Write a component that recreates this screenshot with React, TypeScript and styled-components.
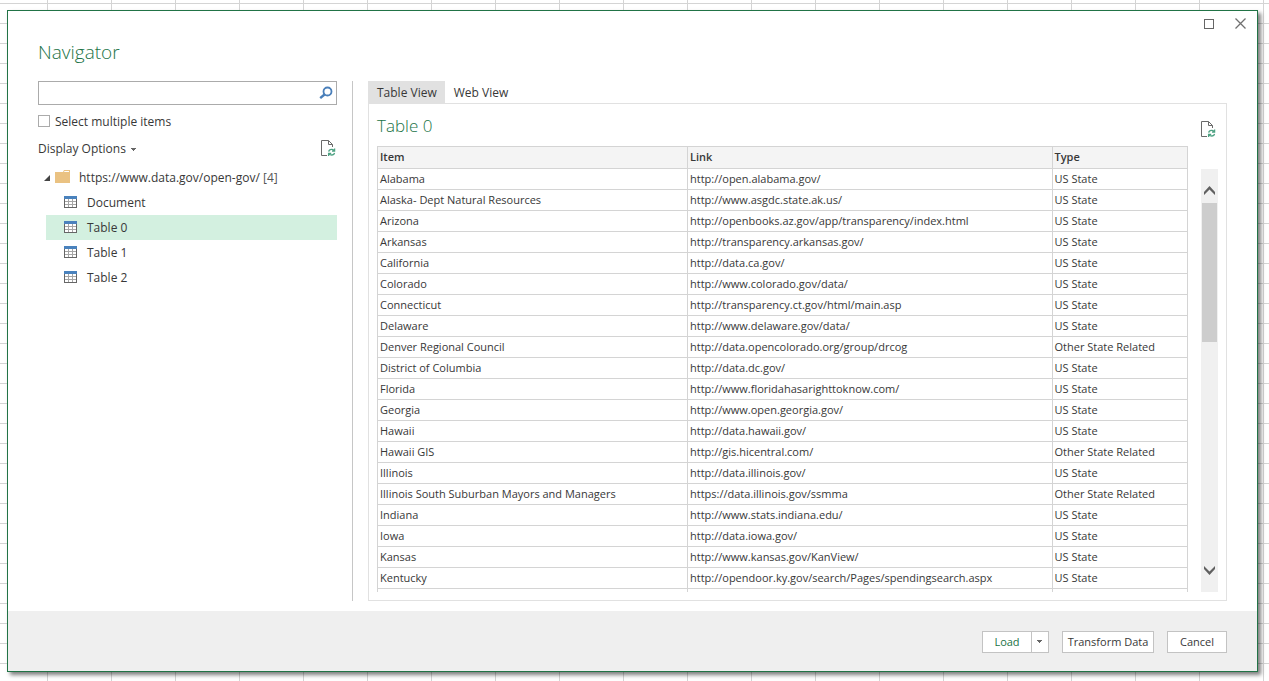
import React, { useState } from "react";
import styled, { createGlobalStyle } from "styled-components";

const GlobalStyle = createGlobalStyle`
  *, *::before, *::after { box-sizing: border-box; }
  body {
    margin: 0;
    font-family: "Open Sans", "Noto Sans", sans-serif;
    font-size: 12px;
    line-height: 16px;
    color: #383838;
  }
  button, input { font: inherit; color: inherit; }
  button { margin: 0; padding: 0; border: 0; background: none; }
  svg { display: block; flex: none; }
`;

const Sheet = styled.div`
  display: flex;
  height: 100vh;
  min-height: 480px;
  padding: 10px 11px 9px 7px;
  background-color: #fff;
  background-image:
    linear-gradient(to right, #d4d4d4 1px, transparent 1px),
    linear-gradient(to bottom, #d4d4d4 1px, transparent 1px);
  background-size: 64px 20px;
  background-position: 47px 3px;
`;

const Dialog = styled.section`
  flex: 1;
  min-width: 0;
  display: flex;
  flex-direction: column;
  border: 1px solid #217346;
  background: #fff;
  box-shadow: 3px 3px 4px rgba(0, 0, 0, 0.5);
`;

const TitleBar = styled.header`
  display: flex;
  justify-content: space-between;
  align-items: flex-start;
  height: 70px;
  padding: 0 8px 0 30px;
`;

const Title = styled.h1`
  margin: 26px 0 0;
  font-size: 19px;
  line-height: 30px;
  font-weight: 300;
  color: #217346;
`;

const WindowControls = styled.div`
  display: flex;
  gap: 16px;
  padding-top: 5px;
`;

const IconButton = styled.button`
  display: flex;
  align-items: center;
  justify-content: center;
  width: 16px;
  height: 16px;
`;

const Body = styled.div`
  flex: 1;
  min-height: 0;
  display: flex;
  padding: 0 30px 10px;
`;

const Sidebar = styled.div`
  flex: none;
  display: flex;
  flex-direction: column;
  width: 315px;
  padding-right: 15px;
  border-right: 1px solid #c6c6c6;
`;

const SearchBox = styled.div`
  display: flex;
  align-items: center;
  height: 24px;
  padding-right: 2px;
  border: 1px solid #ababab;
`;

const SearchInput = styled.input`
  flex: 1;
  min-width: 0;
  height: 22px;
  padding: 0 4px;
  border: 0;
  outline: 0;
  background: none;
`;

const CheckLabel = styled.label`
  display: flex;
  align-items: flex-start;
  gap: 5px;
  height: 18px;
  margin-top: 9px;
`;

const CheckBox = styled.input`
  appearance: none;
  width: 12px;
  height: 12px;
  margin: 1px 0 0;
  border: 1px solid #ababab;
  background: #fff;
  &:checked { background: #217346; }
`;

const OptionsRow = styled.div`
  display: flex;
  align-items: center;
  justify-content: space-between;
  height: 20px;
  margin-top: 6px;
  padding-right: 1px;
`;

const OptionsButton = styled.button`
  display: flex;
  align-items: center;
  gap: 5px;
  padding-top: 2px;
`;

const Tree = styled.ul`
  list-style: none;
  margin: 7px 0 0;
  padding: 0;
`;

const RootRow = styled.button`
  display: flex;
  align-items: center;
  width: 100%;
  height: 25px;
  padding-left: 6px;
  text-align: left;
`;

const FolderSlot = styled.span`
  padding: 0 0 2px 5px;
`;

const RootLabel = styled.span`
  padding-left: 9px;
  white-space: nowrap;
`;

const Count = styled.span`
  color: #555;
`;

const Children = styled.ul`
  list-style: none;
  margin: 0;
  padding: 0 0 0 8px;
`;

const TreeRow = styled.button<{ $selected: boolean }>`
  display: flex;
  align-items: center;
  gap: 10px;
  width: 100%;
  height: 25px;
  padding-left: 18px;
  text-align: left;
  background: ${(p) => (p.$selected ? "#d3f0e0" : "transparent")};

  svg { margin-bottom: 1px; }
`;

const Preview = styled.div`
  flex: 1;
  min-width: 0;
  display: flex;
  flex-direction: column;
  margin-left: 15px;
`;

const Tabs = styled.div`
  display: flex;
  height: 22px;
`;

const Tab = styled.button<{ $active: boolean }>`
  height: 22px;
  padding: 2px 8px 0 9px;
  background: ${(p) => (p.$active ? "#e1e1e1" : "transparent")};
`;

const Panel = styled.div`
  flex: 1;
  min-height: 0;
  display: flex;
  flex-direction: column;
  padding: 0 8px 8px;
  border: 1px solid #e1e1e1;
`;

const PanelHeader = styled.div`
  display: flex;
  align-items: center;
  justify-content: space-between;
  height: 42px;
  padding: 8px 2px 0 0;
`;

const PanelTitle = styled.h2`
  margin: 0;
  padding-bottom: 6px;
  font-size: 17px;
  line-height: 24px;
  font-weight: 300;
  color: #217346;
`;

const Viewport = styled.div`
  flex: 1;
  min-height: 0;
  display: flex;
  gap: 13px;
`;

const TableClip = styled.div`
  flex: 1;
  min-width: 0;
  overflow: hidden;
`;

const DataTable = styled.table`
  width: 100%;
  table-layout: fixed;
  border-collapse: separate;
  border-spacing: 0;
  border-top: 1px solid #d4d4d4;
  border-left: 1px solid #d4d4d4;
  font-size: 11px;
  line-height: 16px;

  th, td {
    height: 21px;
    padding: 0 2px;
    border-right: 1px solid #d4d4d4;
    border-bottom: 1px solid #d4d4d4;
    text-align: left;
    white-space: nowrap;
    overflow: hidden;
  }
  th {
    height: 22px;
    padding-bottom: 2px;
    background: #f4f4f4;
    font-weight: 600;
  }
`;

const ItemCol = styled.col`
  width: 310px;
`;
const LinkCol = styled.col`
  width: 45%;
`;

const ScrollBar = styled.div`
  flex: none;
  display: flex;
  flex-direction: column;
  width: 17px;
  margin-top: 23px;
  background: #f0f0f0;
`;

const ScrollButton = styled.button`
  display: flex;
  align-items: center;
  justify-content: center;
  height: 34px;
  padding-top: 8px;

  &:last-child {
    margin-top: auto;
    padding: 0 0 10px;
  }
`;

const ScrollThumb = styled.div`
  height: 139px;
  margin: 0 1px;
  background: #cdcdcd;
`;

const Footer = styled.footer`
  display: flex;
  align-items: center;
  justify-content: flex-end;
  gap: 13px;
  height: 60px;
  padding: 2px 30px 0;
  background: #efefef;
  font-size: 11px;
`;

const PushButton = styled.button<{ $width: number }>`
  width: ${(p) => p.$width}px;
  height: 22px;
  border: 1px solid #c3c3c3;
  background: #fff;
  white-space: nowrap;
`;

const SplitButton = styled.div`
  display: flex;
  height: 22px;
  border: 1px solid #c3c3c3;
  background: #fff;
`;

const SplitMain = styled.button`
  width: 48px;
  color: #217346;
`;

const SplitArrow = styled.button`
  display: flex;
  align-items: center;
  justify-content: center;
  width: 17px;
  padding: 0 2px 2px 0;
  border-left: 1px solid #c3c3c3;
`;

const CaretIcon = () => (
  <svg width="5" height="3" viewBox="0 0 5 3" fill="#666" shapeRendering="crispEdges">
    <path d="M0 0h5v1H4v1H3v1H2V2H1V1H0z" />
  </svg>
);

const RefreshPageIcon = () => (
  <svg width="16" height="18" viewBox="0 0 16 18" fill="none">
    <path d="M7 16.5H1.500v-15H8.500l4 4V8" stroke="#6a6a6a" />
    <path d="M8.500 1.500v4h4" stroke="#6a6a6a" />
    <path d="M8.700 12.600c.3-1.500 1.400-2.200 2.800-2.200 1.200 0 2 .4 2.600 1.200M14.600 9.600v2.500h-2.600M14.500 13.800c-.3 1.500-1.400 2.200-2.800 2.200-1.200 0-2-.4-2.600-1.200M8.600 16.900v-2.500h2.600" stroke="#4ea283" strokeWidth="1.300" />
  </svg>
);

const SearchIcon = () => (
  <svg width="14" height="14" viewBox="0 0 14 14" fill="none" stroke="#4a7fba">
    <circle cx="8.500" cy="5.500" r="4" strokeWidth="1.800" />
    <path d="M5.500 8.500L1.200 12.200" strokeWidth="2.400" />
  </svg>
);

const ExpanderIcon = () => (
  <svg width="6" height="6" viewBox="0 0 6 6">
    <path d="M6 0v6H0z" fill="#444" />
  </svg>
);

const FolderIcon = () => (
  <svg width="15" height="13" viewBox="0 0 15 13">
    <path d="M0 2h8l1-2h6v13H0z" fill="#eac282" />
    <path d="M9.500 1h4.500v1H9z" fill="#fff" />
  </svg>
);

const TableIcon = () => (
  <svg width="13" height="12" viewBox="0 0 13 12" shapeRendering="crispEdges">
    <path d="M0 0h13v12H0z" fill="#666" />
    <path d="M0 0h13v3H0z" fill="#4a82bd" />
    <path d="M1 3h11v8H1z" fill="#fff" />
    <path d="M4 3h1v8H4zM8 3h1v8H8zM1 5h11v1H1zM1 8h11v1H1z" fill="#a6a6a6" />
  </svg>
);

const MaximizeIcon = () => (
  <svg width="10" height="10" viewBox="0 0 10 10" fill="none" stroke="#666" shapeRendering="crispEdges">
    <path d="M.5.5h9v9h-9z" />
  </svg>
);

const CloseIcon = () => (
  <svg width="12" height="12" viewBox="0 0 12 12" stroke="#707070" strokeWidth="1.300">
    <path d="M.5.500l10 10M10.500.500l-10 10" />
  </svg>
);

const ChevronIcon = ({ down = false }: { down?: boolean }) => (
  <svg width="11" height="9" viewBox="0 0 11 9" fill="#606060">
    <path d={down ? "M0 0l5.500 5.500L11 0v3L5.500 9 0 3z" : "M0 9l5.500-5.500L11 9V6L5.500 0 0 6z"} />
  </svg>
);

const STATE = "US State";
const OTHER = "Other State Related";

const rows: [string, string, string][] = [
  ["Alabama", "http://open.alabama.gov/", STATE],
  ["Alaska- Dept Natural Resources", "http://www.asgdc.state.ak.us/", STATE],
  ["Arizona", "http://openbooks.az.gov/app/transparency/index.html", STATE],
  ["Arkansas", "http://transparency.arkansas.gov/", STATE],
  ["California", "http://data.ca.gov/", STATE],
  ["Colorado", "http://www.colorado.gov/data/", STATE],
  ["Connecticut", "http://transparency.ct.gov/html/main.asp", STATE],
  ["Delaware", "http://www.delaware.gov/data/", STATE],
  ["Denver Regional Council", "http://data.opencolorado.org/group/drcog", OTHER],
  ["District of Columbia", "http://data.dc.gov/", STATE],
  ["Florida", "http://www.floridahasarighttoknow.com/", STATE],
  ["Georgia", "http://www.open.georgia.gov/", STATE],
  ["Hawaii", "http://data.hawaii.gov/", STATE],
  ["Hawaii GIS", "http://gis.hicentral.com/", OTHER],
  ["Illinois", "http://data.illinois.gov/", STATE],
  ["Illinois South Suburban Mayors and Managers", "https://data.illinois.gov/ssmma", OTHER],
  ["Indiana", "http://www.stats.indiana.edu/", STATE],
  ["Iowa", "http://data.iowa.gov/", STATE],
  ["Kansas", "http://www.kansas.gov/KanView/", STATE],
  ["Kentucky", "http://opendoor.ky.gov/search/Pages/spendingsearch.aspx", STATE],
  ["", "", ""],
];

const items = ["Document", "Table 0", "Table 1", "Table 2"];

export default function App() {
  const [selected, setSelected] = useState("Table 0");
  const [view, setView] = useState("Table View");
  const [open, setOpen] = useState(true);

  return (
    <>
      <GlobalStyle />
      <Sheet>
        <Dialog role="dialog" aria-labelledby="dialog-title">
          <TitleBar>
            <Title id="dialog-title">Navigator</Title>
            <WindowControls>
              <IconButton aria-label="Maximize"><MaximizeIcon /></IconButton>
              <IconButton aria-label="Close"><CloseIcon /></IconButton>
            </WindowControls>
          </TitleBar>

          <Body>
            <Sidebar>
              <SearchBox>
                <SearchInput type="text" aria-label="Search" />
                <IconButton aria-label="Search"><SearchIcon /></IconButton>
              </SearchBox>
              <CheckLabel>
                <CheckBox type="checkbox" />
                Select multiple items
              </CheckLabel>
              <OptionsRow>
                <OptionsButton>
                  Display Options
                  <CaretIcon />
                </OptionsButton>
                <IconButton aria-label="Refresh"><RefreshPageIcon /></IconButton>
              </OptionsRow>
              <Tree>
                <li>
                  <RootRow aria-expanded={open} onClick={() => setOpen(!open)}>
                    <ExpanderIcon />
                    <FolderSlot><FolderIcon /></FolderSlot>
                    <RootLabel>
                      https://www.data.gov/open-gov/ <Count>[4]</Count>
                    </RootLabel>
                  </RootRow>
                  {open && (
                    <Children>
                      {items.map((name) => (
                        <li key={name}>
                          <TreeRow $selected={name === selected} onClick={() => setSelected(name)}>
                            <TableIcon />
                            {name}
                          </TreeRow>
                        </li>
                      ))}
                    </Children>
                  )}
                </li>
              </Tree>
            </Sidebar>

            <Preview>
              <Tabs role="tablist">
                {["Table View", "Web View"].map((name) => (
                  <Tab
                    key={name}
                    role="tab"
                    aria-selected={name === view}
                    $active={name === view}
                    onClick={() => setView(name)}
                  >
                    {name}
                  </Tab>
                ))}
              </Tabs>
              <Panel>
                <PanelHeader>
                  <PanelTitle>{selected}</PanelTitle>
                  <IconButton aria-label="Refresh preview"><RefreshPageIcon /></IconButton>
                </PanelHeader>
                <Viewport>
                  <TableClip>
                    <DataTable>
                      <colgroup>
                        <ItemCol />
                        <LinkCol />
                        <col />
                      </colgroup>
                      <thead>
                        <tr>
                          <th scope="col">Item</th>
                          <th scope="col">Link</th>
                          <th scope="col">Type</th>
                        </tr>
                      </thead>
                      <tbody>
                        {rows.map(([item, link, type], i) => (
                          <tr key={i}>
                            <td>{item}</td>
                            <td>{link}</td>
                            <td>{type}</td>
                          </tr>
                        ))}
                      </tbody>
                    </DataTable>
                  </TableClip>
                  <ScrollBar>
                    <ScrollButton aria-label="Scroll up"><ChevronIcon /></ScrollButton>
                    <ScrollThumb />
                    <ScrollButton aria-label="Scroll down"><ChevronIcon down /></ScrollButton>
                  </ScrollBar>
                </Viewport>
              </Panel>
            </Preview>
          </Body>

          <Footer>
            <SplitButton>
              <SplitMain>Load</SplitMain>
              <SplitArrow aria-label="Load options"><CaretIcon /></SplitArrow>
            </SplitButton>
            <PushButton $width={92}>Transform Data</PushButton>
            <PushButton $width={60}>Cancel</PushButton>
          </Footer>
        </Dialog>
      </Sheet>
    </>
  );
}
